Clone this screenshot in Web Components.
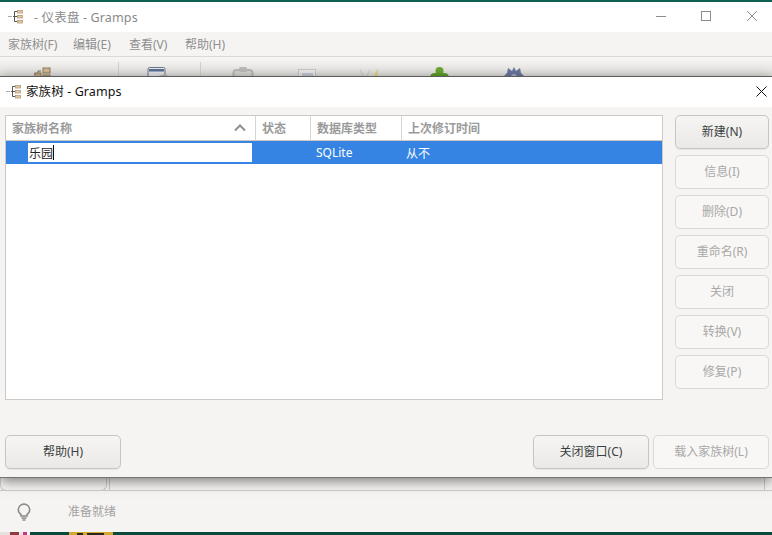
<!DOCTYPE html>
<html lang="zh">
<head>
<meta charset="utf-8">
<title>Gramps</title>
<style>
    html, body { margin: 0; height: 100%; overflow: hidden; }
    body { font: 12px "Noto Sans", "Noto Sans CJK SC", sans-serif; color: #2e3436; }
</style>
</head>
<body>
<gramps-app>
    <gramps-dialog slot="dialog" heading="家族树 - Gramps">
        <gramps-tree></gramps-tree>
        <gramps-button slot="side" main>新建(N)</gramps-button>
        <gramps-button slot="side">信息(I)</gramps-button>
        <gramps-button slot="side">删除(D)</gramps-button>
        <gramps-button slot="side">重命名(R)</gramps-button>
        <gramps-button slot="side">关闭</gramps-button>
        <gramps-button slot="side">转换(V)</gramps-button>
        <gramps-button slot="side">修复(P)</gramps-button>
        <gramps-button slot="left" main wide>帮助(H)</gramps-button>
        <gramps-button slot="right" main wide>关闭窗口(C)</gramps-button>
        <gramps-button slot="right" wide>载入家族树(L)</gramps-button>
    </gramps-dialog>
</gramps-app>

<script>
(function() {
    // small tree logo used in both title bars
    class GrampsLogo extends HTMLElement {
        constructor() {
            super();
            this.attachShadow({ mode: 'open' }).innerHTML = `
<style>
    :host { display: block; width: 16px; height: 16px; flex: none; }
    svg { display: block; }
</style>
<svg width="16" height="16" viewBox="0 0 16 16">
    <rect x="0" y="7" width="4" height="1" fill="#a8a8a8"/>
    <path d="M9 2.500H6.500V12.500H9M5 7.500H9" fill="none" stroke="#555" stroke-width="1"/>
    <rect x="9.500" y="1.500" width="5" height="2.500" fill="#e2c9a6" stroke="#b39a78" stroke-width=".8"/>
    <rect x="9.500" y="6.500" width="5" height="2.500" fill="#e2c9a6" stroke="#b39a78" stroke-width=".8"/>
    <rect x="9.500" y="11.500" width="5" height="2.500" fill="#e2c9a6" stroke="#b39a78" stroke-width=".8"/>
</svg>`;
        }
    }

    const appTemplate = document.createElement('template');
    appTemplate.innerHTML = `
<style>
    :host {
        display: flex;
        flex-direction: column;
        position: relative;
        width: 772px;
        height: 535px;
        overflow: hidden;
        background: #f5f4f2;
        color: #8f8f8f;
        font: 12px "Noto Sans", "Noto Sans CJK SC", sans-serif;
    }
    .strip { height: 2px; background: #0e6152; flex: none; }
    .titlebar {
        height: 30px;
        flex: none;
        background: #fff;
        display: flex;
        align-items: center;
        padding-left: 8px;
        color: #8a8a8a;
    }
    .titlebar span { margin: -2px 0 0 10px; font-size: 12.5px; letter-spacing: .15px; }
    .controls { margin-left: auto; display: flex; }
    .controls svg { display: block; width: 46px; height: 30px; }
    .controls svg:last-child { width: 43px; }
    .menu {
        height: 24px;
        flex: none;
        display: grid;
        grid-template-columns: 65px 56px 56px auto;
        align-items: center;
        padding-left: 8px;
        border-bottom: 1px solid #dcdad6;
    }
    .toolbar {
        height: 60px;
        flex: none;
        display: flex;
        align-items: flex-start;
        padding-top: 10px;
        box-sizing: border-box;
        background: linear-gradient(#f7f6f4, #dcdad7 24px);
    }
    .toolbar svg { display: block; flex: none; }
    .sep { width: 1px; height: 40px; background: #d2d0cc; margin-top: -5px; flex: none; }
    .content {
        flex: 1;
        display: flex;
        align-items: flex-end;
        gap: 2px;
        border-bottom: 1px solid #cfcbc6;
    }
    .tab {
        width: 107px;
        height: 30px;
        border: 1px solid #cfcbc6;
        border-radius: 0 0 6px 6px;
        border-top: 0;
        flex: none;
        margin-bottom: -1px;
        display: flex;
        align-items: flex-end;
        padding: 0 0 12px 12px;
        box-sizing: border-box;
        line-height: 14px;
        color: #777;
    }
    .pane {
        flex: 1;
        height: 30px;
        margin-right: 7px;
        border: 1px solid #cfcbc6;
        border-bottom: 0;
        box-sizing: border-box;
        display: flex;
        align-items: flex-end;
        padding: 0 0 11px 351px;
        line-height: 14px;
        color: #555;
    }
    .status {
        height: 41px;
        flex: none;
        display: flex;
        align-items: center;
        padding-left: 16px;
        gap: 36px;
        color: #a3a3a3;
    }
    .status svg { display: block; }
    .status span { margin-top: -2px; }
    .wall {
        height: 3px;
        flex: none;
        display: flex;
        background: #0a4a3c;
    }
    .wall i { display: block; flex: none; height: 3px; }
</style>
<div class="strip"></div>
<div class="titlebar">
    <gramps-logo></gramps-logo>
    <span>- 仪表盘 - Gramps</span>
    <div class="controls">
        <svg viewBox="0 0 46 30"><path d="M19 14.500H29" stroke="#8c8c8c"/></svg>
        <svg viewBox="0 0 46 30"><rect x="18.500" y="9.500" width="9" height="9" fill="none" stroke="#8c8c8c"/></svg>
        <svg viewBox="0 0 43 30"><path d="M18 9L28 19M28 9L18 19" stroke="#8c8c8c" fill="none"/></svg>
    </div>
</div>
<div class="menu">
    <span>家族树(F)</span><span>编辑(E)</span><span>查看(V)</span><span>帮助(H)</span>
</div>
<div class="toolbar">
    <svg width="18" height="18" viewBox="0 0 18 18" style="margin-left:33px">
        <path d="M1 7H5V4H8" fill="none" stroke="#6f6a60"/>
        <rect x="2" y="6" width="6" height="5" fill="#c9ad86" stroke="#8f7a5c"/>
        <rect x="10" y="1" width="7" height="5" fill="#d3b995" stroke="#8f7a5c"/>
        <rect x="10" y="8" width="7" height="5" fill="#d3b995" stroke="#8f7a5c"/>
    </svg>
    <div class="sep" style="margin-left:67px"></div>
    <svg width="22" height="18" viewBox="0 0 22 18" style="margin-left:28px">
        <rect x="1" y=".5" width="17" height="17" rx="1.500" fill="#e8e8ea" stroke="#6d7892"/>
        <rect x="2" y="2" width="15" height="2.500" fill="#5d6f97"/>
        <path d="M8 10L18 7L21 9L12 13Z" fill="#b8b8b6"/>
    </svg>
    <div class="sep" style="margin-left:31px"></div>
    <svg width="22" height="18" viewBox="0 0 22 18" style="margin-left:31px">
        <rect x="1.500" y="3" width="19" height="15" rx="3" fill="#d8d7d4" stroke="#b9b8b5" stroke-width="2"/>
        <rect x="7" y="0" width="8" height="5" rx="1.500" fill="#bcbbb8"/>
    </svg>
    <svg width="20" height="18" viewBox="0 0 20 18" style="margin-left:44px">
        <rect x=".5" y="2.500" width="17" height="15" fill="#ececea" stroke="#c9c8c6"/>
        <rect x="4" y="6" width="11" height="8" fill="#c5ccd6"/>
    </svg>
    <svg width="20" height="18" viewBox="0 0 20 18" style="margin-left:41px">
        <path d="M1 3L7 13M11 3L6 13" fill="none" stroke="#d4d3d0" stroke-width="1.500"/>
        <path d="M19 1V13H12Z" fill="#e3d592"/>
    </svg>
    <svg width="19" height="18" viewBox="0 0 19 18" style="margin-left:51px">
        <circle cx="9.500" cy="4" r="4" fill="#69a832"/>
        <path d="M0 11Q0 6 5 6H14Q19 6 19 11V18H0Z" fill="#5ba02a"/>
    </svg>
    <svg width="20" height="18" viewBox="0 0 20 18" style="margin-left:55px">
        <path d="M10 0L12 4L16 1L17 6L20 9L17 12V18H3V12L0 9L3 6L4 1L8 4Z" fill="#6a78a0"/>
        <circle cx="10" cy="10" r="3" fill="#aab2c8"/>
    </svg>
</div>
<div class="content">
    <div class="tab">关联</div>
    <div class="pane">详细资料</div>
</div>
<div class="status">
    <svg width="16" height="18" viewBox="0 0 16 18">
        <path d="M5 11.500C3.300 10.400 2.300 8.800 2.300 6.800A5.700 5.700 0 0 1 13.700 6.800C13.700 8.800 12.700 10.400 11 11.500V13H5Z" fill="none" stroke="#8c8c8c" stroke-width="1.600"/>
        <path d="M5.500 15H10.500M6.500 17H9.500" stroke="#8c8c8c" stroke-width="1.300"/>
    </svg>
    <span>准备就绪</span>
</div>
<div class="wall">
    <i style="width:30px;background:linear-gradient(90deg,#e4e0de 0 10px,#8e3b3f 10px 19px,#e8e4e4 19px 23px,#c9357f 23px 27px,#f4f0f0 27px)"></i>
    <i style="width:39px"></i>
    <i style="width:44px;background:linear-gradient(#d5a92f 1px,transparent 1px),linear-gradient(90deg,#d5a92f 0 8px,#2a2520 8px 14px,#d5a92f 14px 18px,#2a2520 18px 35px,#d5a92f 35px)"></i>
</div>
<slot name="dialog"></slot>`;

    class GrampsApp extends HTMLElement {
        constructor() {
            super();
            this.attachShadow({ mode: 'open' }).appendChild(appTemplate.content.cloneNode(true));
        }
    }

    const dialogTemplate = document.createElement('template');
    dialogTemplate.innerHTML = `
<style>
    :host {
        display: flex;
        flex-direction: column;
        position: absolute;   /* the dialog floats over the main window */
        left: 0;
        top: 76px;
        width: 772px;
        height: 402px;
        box-sizing: border-box;
        background: #f5f4f2;
        border-top: 1px solid #5c5c5c;
        border-bottom: 1px solid #77746f;
        box-shadow: 0 3px 12px rgba(0, 0, 0, .5);
        color: #2e3436;
    }
    header {
        height: 30px;
        flex: none;
        background: #fff;
        display: flex;
        align-items: center;
        padding-left: 6px;
        color: #111;
    }
    header span { margin: -3px 0 0 4px; font-size: 12.5px; letter-spacing: .1px; }
    header svg { margin-left: auto; margin-right: 5px; display: block; }
    .main {
        flex: 1;
        min-height: 0;
        display: flex;
        gap: 12px;
        padding: 8px 3px 0 5px;
    }
    .side {
        width: 94px;
        flex: none;
        display: flex;
        flex-direction: column;
        gap: 6px;
    }
    footer {
        flex: none;
        display: flex;
        justify-content: space-between;
        padding: 35px 3px 8px 5px;
    }
    .group { display: flex; gap: 4px; }
</style>
<header>
    <gramps-logo></gramps-logo>
    <span></span>
    <svg width="11" height="11" viewBox="0 0 11 11" style="margin-top:-2px"><path d="M.5 .5L10.500 10.500M10.500 .5L.5 10.500" stroke="#111" fill="none"/></svg>
</header>
<div class="main">
    <slot></slot>
    <div class="side"><slot name="side"></slot></div>
</div>
<footer>
    <div class="group"><slot name="left"></slot></div>
    <div class="group"><slot name="right"></slot></div>
</footer>`;

    class GrampsDialog extends HTMLElement {
        constructor() {
            super();
            this.attachShadow({ mode: 'open' }).appendChild(dialogTemplate.content.cloneNode(true));
        }

        connectedCallback() {
            this.shadowRoot.querySelector('header span').textContent = this.getAttribute('heading');
        }
    }

    const buttonTemplate = document.createElement('template');
    buttonTemplate.innerHTML = `
<style>
    :host {
        display: flex;
        align-items: center;
        justify-content: center;
        box-sizing: border-box;
        width: 94px;
        height: 34px;
        flex: none;
        padding-bottom: 2px;
        border: 1px solid #dcd8d3;
        border-radius: 5px;
        background: #f8f7f6;
        color: #a8a8a6;
    }
    :host([wide]) { width: 116px; }
    :host([main]) {
        border-color: #c9c4be;
        background: linear-gradient(#f6f5f4, #ebe9e7);
        box-shadow: 0 1px 1px rgba(0, 0, 0, .06);
        color: #3a3f41;
    }
</style>
<slot></slot>`;

    class GrampsButton extends HTMLElement {
        constructor() {
            super();
            this.attachShadow({ mode: 'open' }).appendChild(buttonTemplate.content.cloneNode(true));
        }
    }

    const treeTemplate = document.createElement('template');
    treeTemplate.innerHTML = `
<style>
    :host {
        display: block;
        flex: 1;
        min-width: 0;
        box-sizing: border-box;
        height: 285px;
        border: 1px solid #cdc8c3;
        background: #fff;
    }
    .head, .row {
        display: grid;
        grid-template-columns: 250px 55px 91px 1fr;
    }
    .head {
        height: 25px;
        box-sizing: border-box;
        border-bottom: 1px solid #cdc8c3;
        color: #9a9a9a;
        font-weight: 700;
    }
    .head div {
        display: flex;
        align-items: center;
        justify-content: space-between;
        padding: 0 9px 0 6px;
        border-right: 1px solid #d8d5d0;
    }
    .head div:last-child { border-right: 0; }
    .head svg { display: block; }
    .row {
        height: 23px;
        align-items: center;
        background: #3584e4;
        color: #fff;
    }
    .entry {
        margin-left: 22px;
        width: 224px;
        height: 19px;
        background: #fff;
        color: #222;
        display: flex;
        align-items: center;
        padding-left: 1px;
        box-sizing: border-box;
    }
    .entry i { width: 1px; height: 15px; background: #111; }
    .db { padding-left: 5px; }
    .last { padding-left: 4px; }
</style>
<div class="head">
    <div>家族树名称
        <svg width="12" height="8" viewBox="0 0 12 8"><path d="M1 6.500L6 1.500L11 6.500" fill="none" stroke="#8e8e8e" stroke-width="2"/></svg>
    </div>
    <div>状态</div>
    <div>数据库类型</div>
    <div>上次修订时间</div>
</div>
<div class="row">
    <div class="entry">乐园<i></i></div>
    <div></div>
    <div class="db">SQLite</div>
    <div class="last">从不</div>
</div>`;

    class GrampsTree extends HTMLElement {
        constructor() {
            super();
            this.attachShadow({ mode: 'open' }).appendChild(treeTemplate.content.cloneNode(true));
        }
    }

    window.customElements.define('gramps-logo', GrampsLogo);
    window.customElements.define('gramps-app', GrampsApp);
    window.customElements.define('gramps-dialog', GrampsDialog);
    window.customElements.define('gramps-button', GrampsButton);
    window.customElements.define('gramps-tree', GrampsTree);
})();
</script>
</body>
</html>
